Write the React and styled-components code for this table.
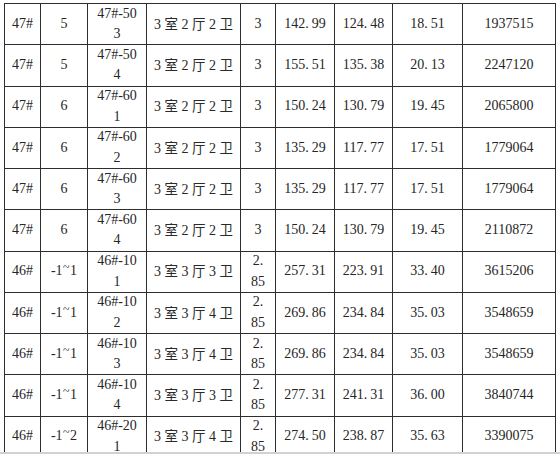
import React from "react";
import styled, { createGlobalStyle } from "styled-components";

const Global = createGlobalStyle`
  html, body { margin: 0; padding: 0; background: #d2d2d2; }
  #root { width: 560px; }
`;

const Page = styled.div`
  width: 560px;
  height: 452px;
  overflow: hidden;
  background: #ffffff;
  padding: 3px 0 0 4px;
  box-sizing: border-box;
`;

const Grid = styled.div`
  display: grid;
  grid-template-columns: 36px 47px 59px 94px 35px 59px 58px 70px 93px;
  grid-auto-rows: 41.25px;
  width: max-content;
  border-left: 1px solid #2e2e2e;
  border-top: 1px solid #2e2e2e;
  font-family: "Liberation Serif", "Times New Roman", serif;
  font-size: 14px;
  line-height: 20.5px;
  color: #262626;
`;

const Cell = styled.div`
  box-sizing: border-box;
  border-right: 1px solid #2e2e2e;
  border-bottom: 1px solid #2e2e2e;
  display: flex;
  align-items: center;
  justify-content: center;
  text-align: center;
  padding: 0 ${(p) => p.$pad}px;
  word-break: break-all;
  overflow: hidden;
  white-space: ${(p) => (p.$nowrap ? "nowrap" : "normal")};
`;

const Han = styled.span`
  font-family: "Noto Sans CJK SC", sans-serif;
  font-size: 13.5px;
  font-weight: 400;
  color: #2a2a2a;
`;

const Dot = styled.span`
  margin-right: 3px;
`;

const Tilde = styled.span`
  display: inline-block;
  font-size: 12px;
  transform: translateY(-4px);
  margin: 0 0.5px;
`;

const rows = [
  ["47#", "5", "47#-503", ["3", "2", "2"], "3", "142.99", "124.48", "18.51", "1937515"],
  ["47#", "5", "47#-504", ["3", "2", "2"], "3", "155.51", "135.38", "20.13", "2247120"],
  ["47#", "6", "47#-601", ["3", "2", "2"], "3", "150.24", "130.79", "19.45", "2065800"],
  ["47#", "6", "47#-602", ["3", "2", "2"], "3", "135.29", "117.77", "17.51", "1779064"],
  ["47#", "6", "47#-603", ["3", "2", "2"], "3", "135.29", "117.77", "17.51", "1779064"],
  ["47#", "6", "47#-604", ["3", "2", "2"], "3", "150.24", "130.79", "19.45", "2110872"],
  ["46#", "-1~1", "46#-101", ["3", "3", "3"], "2.85", "257.31", "223.91", "33.40", "3615206"],
  ["46#", "-1~1", "46#-102", ["3", "3", "4"], "2.85", "269.86", "234.84", "35.03", "3548659"],
  ["46#", "-1~1", "46#-103", ["3", "3", "4"], "2.85", "269.86", "234.84", "35.03", "3548659"],
  ["46#", "-1~1", "46#-104", ["3", "3", "3"], "2.85", "277.31", "241.31", "36.00", "3840744"],
  ["46#", "-1~2", "46#-201", ["3", "3", "4"], "2.85", "274.50", "238.87", "35.63", "3390075"],
];

const pads = [2, 2, 7, 2, 9, 2, 2, 2, 2];

function Floor({ text }) {
  const i = text.indexOf("~");
  return (
    <>
      {text.slice(0, i)}
      <Tilde>~</Tilde>
      {text.slice(i + 1)}
    </>
  );
}

function Decimal({ text }) {
  const i = text.indexOf(".");
  return (
    <span>
      {text.slice(0, i)}
      <Dot>.</Dot>
      {text.slice(i + 1)}
    </span>
  );
}

function Layout({ parts }) {
  const [a, b, c] = parts;
  return (
    <span>
      {a} <Han>室</Han> {b} <Han>厅</Han> {c} <Han>卫</Han>
    </span>
  );
}

function render(v, ci) {
  if (ci === 3) return <Layout parts={v} />;
  if (ci === 1 && v.includes("~")) return <Floor text={v} />;
  if (ci >= 5 && ci <= 7) return <Decimal text={v} />;
  return v;
}

export default function App() {
  return (
    <>
      <Global />
      <Page>
        <Grid>
          {rows.map((r, ri) =>
            r.map((v, ci) => (
              <Cell key={ri + "-" + ci} $pad={pads[ci]} $nowrap={ci === 3}>
                {render(v, ci)}
              </Cell>
            ))
          )}
        </Grid>
      </Page>
    </>
  );
}
